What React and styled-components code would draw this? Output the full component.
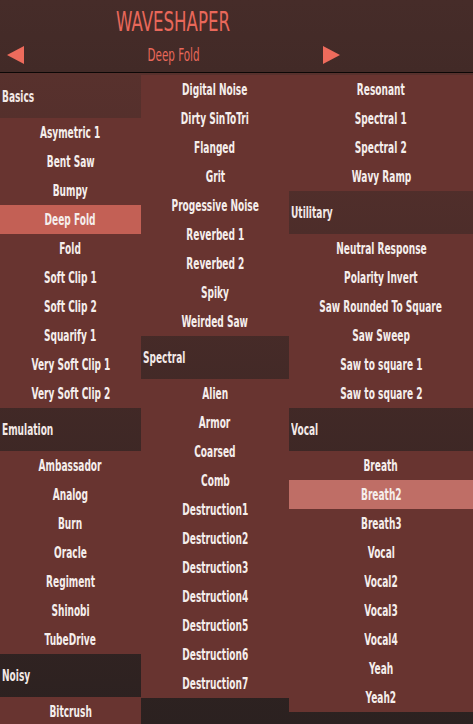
import React from 'react'
import styled, { createGlobalStyle } from 'styled-components';

const Global = createGlobalStyle`
  html, body {
    margin: 0;
    height: 100%;
    overflow: hidden;
    background: #2b2120;
  }
  body {
    font-family: "Liberation Sans Narrow", "DejaVu Sans Condensed", "Liberation Sans", sans-serif;
  }
`;

const Shell = styled.div`
  width: 473px;
  height: 724px;
  display: flex;
  flex-direction: column;
  overflow: hidden;
`;

const Header = styled.header`
  height: 72px;
  background: linear-gradient(#462c29, #422a27);
  border-bottom: 1px solid #0c0706;
  display: flex;
  flex-direction: column;
`;

const Title = styled.h1`
  width: 346px;
  margin: 0;
  padding-top: 7px;
  height: 30px;
  text-align: center;
  font-weight: normal;
  font-size: 26px;
  line-height: 30px;
  color: #e9685a;
  transform: scaleX(0.71);
`;

const PresetBar = styled.div`
  width: 346px;
  display: flex;
  align-items: center;
  justify-content: space-between;
  padding: 0 6px 0 7px;
  box-sizing: border-box;
  height: 36px;
`;

const PresetName = styled.span`
  color: #e9685a;
  font-size: 18px;
  display: inline-block;
  transform: scaleX(0.64);
`;

const Arrow = ({ dir }) => (
  <svg width="17" height="18" viewBox="0 0 17 18">
    {dir === 'left'
      ? <polygon points="17,0 17,18 0,9" fill="#ee6b5c" />
      : <polygon points="0,0 0,18 17,9" fill="#ee6b5c" />}
  </svg>
);

const List = styled.div`
  flex: 1;
  display: grid;
  grid-template-columns: 141px 148px 184px;
  align-items: start;
  padding-top: 2px;
  background: linear-gradient(#58312d, #2b2120);
`;

const Column = styled.div`
  display: flex;
  flex-direction: column;
`;

const GroupTitle = styled.div`
  height: 43px;
  display: flex;
  align-items: center;
  padding-left: 2px;
  color: #f3e9e7;
  font-size: 15px;
  font-weight: bold;
  span {
    display: inline-block;
    transform: scaleX(0.67);
    transform-origin: left center;
  }
`;

const Item = styled.div`
  height: 29px;
  display: flex;
  align-items: center;
  justify-content: center;
  color: #f5eeec;
  font-size: 15px;
  font-weight: bold;
  white-space: nowrap;
  background: ${({ $state }) =>
    $state === 'selected' ? '#c36055' : $state === 'hover' ? '#bf6e66' : '#683430'};
`;

const Label = styled.span`
  display: inline-block;
  transform: scaleX(0.67);
`;

const columns = [
  [
    { group: 'Basics' },
    'Asymetric 1', 'Bent Saw', 'Bumpy', { name: 'Deep Fold', state: 'selected' }, 'Fold',
    'Soft Clip 1', 'Soft Clip 2', 'Squarify 1', 'Very Soft Clip 1', 'Very Soft Clip 2',
    { group: 'Emulation' },
    'Ambassador', 'Analog', 'Burn', 'Oracle', 'Regiment', 'Shinobi', 'TubeDrive',
    { group: 'Noisy' },
    'Bitcrush',
  ],
  [
    'Digital Noise', 'Dirty SinToTri', 'Flanged', 'Grit', 'Progessive Noise',
    'Reverbed 1', 'Reverbed 2', 'Spiky', 'Weirded Saw',
    { group: 'Spectral' },
    'Alien', 'Armor', 'Coarsed', 'Comb', 'Destruction1', 'Destruction2', 'Destruction3',
    'Destruction4', 'Destruction5', 'Destruction6', 'Destruction7',
  ],
  [
    'Resonant', 'Spectral 1', 'Spectral 2', 'Wavy Ramp',
    { group: 'Utilitary' },
    'Neutral Response', 'Polarity Invert', 'Saw Rounded To Square', 'Saw Sweep',
    'Saw to square 1', 'Saw to square 2',
    { group: 'Vocal' },
    'Breath', { name: 'Breath2', state: 'hover' }, 'Breath3', 'Vocal', 'Vocal2', 'Vocal3',
    'Vocal4', 'Yeah', 'Yeah2',
  ],
];

export default function App() {
  return (
    <>
      <Global />
      <Shell>
        <Header>
          <Title>WAVESHAPER</Title>
          <PresetBar>
            <Arrow dir="left" />
            <PresetName>Deep Fold</PresetName>
            <Arrow dir="right" />
          </PresetBar>
        </Header>
        <List>
          {columns.map((col, ci) => (
            <Column key={ci}>
              {col.map((entry, i) => {
                if (typeof entry === 'string') return <Item key={i}><Label>{entry}</Label></Item>;
                if (entry.group) return <GroupTitle key={i}><span>{entry.group}</span></GroupTitle>;
                return <Item key={i} $state={entry.state}><Label>{entry.name}</Label></Item>;
              })}
            </Column>
          ))}
        </List>
      </Shell>
    </>
  )
}
